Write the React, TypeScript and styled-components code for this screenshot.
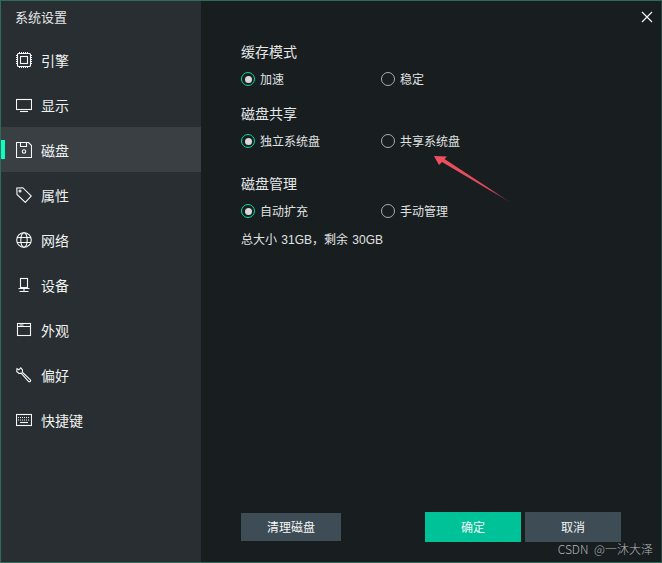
import { ReactNode } from "react";
import styled, { createGlobalStyle } from "styled-components";

const GlobalStyle = createGlobalStyle`
  html, body {
    margin: 0;
    padding: 0;
    background: #181d20;
  }
  * {
    box-sizing: border-box;
  }
`;

const Window = styled.div`
  position: relative;
  display: flex;
  width: 662px;
  height: 563px;
  border: 1px solid #2f6b5a;
  border-right-color: #24483f;
  background: #181d20;
  color: #e6e8e8;
  font-family: "Liberation Sans", "Noto Sans CJK SC", sans-serif;
  overflow: hidden;
`;

const Sidebar = styled.aside`
  width: 200px;
  flex-shrink: 0;
  background: #282e31;
`;

const SidebarTitle = styled.div`
  height: 36px;
  padding: 8px 0 0 14px;
  font-size: 13px;
  line-height: 17px;
`;

const NavList = styled.ul`
  list-style: none;
  margin: 0;
  padding: 0;
`;

const NavItem = styled.li<{ $active?: boolean }>`
  position: relative;
  display: flex;
  align-items: center;
  height: 45px;
  padding-left: 15px;
  font-size: 14px;
  color: #f0f2f2;
  background: ${(props) => (props.$active ? "#393f42" : "transparent")};

  &::before {
    content: "";
    display: ${(props) => (props.$active ? "block" : "none")};
    position: absolute;
    left: 0;
    top: 13px;
    width: 4px;
    height: 19px;
    background: #0dfcc0;
  }
`;

const NavIcon = styled.svg`
  width: 16px;
  height: 16px;
  margin-right: 9px;
  flex-shrink: 0;
  fill: none;
  stroke: #f6f8f8;
  stroke-width: 1.1;
`;

const Main = styled.main`
  position: relative;
  flex: 1;
  display: flex;
  flex-direction: column;
  padding: 42px 40px 20px 40px;
`;

const CloseButton = styled.svg`
  position: absolute;
  top: 10px;
  right: 12px;
  width: 12px;
  height: 12px;
  stroke: #f2f4f4;
  stroke-width: 1.2;
`;

const Section = styled.section<{ $gap: number }>`
  margin-bottom: ${(props) => props.$gap}px;
`;

const SectionTitle = styled.div`
  font-size: 14px;
  line-height: 18px;
  color: #e6e8e8;
`;

const RadioRow = styled.div`
  display: flex;
  margin-top: 9px;
`;

const RadioOption = styled.label`
  display: flex;
  align-items: center;
  width: 140px;
  height: 18px;
  font-size: 12px;
  color: #e0e2e2;
`;

const RadioCircle = styled.span<{ $checked?: boolean }>`
  display: flex;
  align-items: center;
  justify-content: center;
  width: 14px;
  height: 14px;
  margin-right: 5px;
  border-radius: 50%;
  border: 1.5px solid ${(props) => (props.$checked ? "#0fd3a4" : "#a9adae")};

  &::after {
    content: "";
    display: ${(props) => (props.$checked ? "block" : "none")};
    width: 7px;
    height: 7px;
    border-radius: 50%;
    background: #d8dada;
  }
`;

const RadioText = styled.span`
  padding-bottom: 2px;
`;

const Summary = styled.div`
  margin-top: 12px;
  font-size: 12px;
  line-height: 16px;
  word-spacing: 1px;
  color: #e0e2e2;
`;

const Footer = styled.footer`
  display: flex;
  align-items: center;
  margin-top: auto;
`;

const Button = styled.button<{ $primary?: boolean; $small?: boolean }>`
  width: ${(props) => (props.$small ? 100 : 96)}px;
  height: ${(props) => (props.$small ? 28 : 30)}px;
  margin-right: 4px;
  border: none;
  padding: 0 0 2px;
  font-family: inherit;
  font-size: 12px;
  color: #f4f6f6;
  background: ${(props) => (props.$primary ? "#00c298" : "#3d4c55")};
`;

const Spacer = styled.div`
  width: 80px;
`;

const Arrow = styled.svg`
  position: absolute;
  left: 231px;
  top: 153px;
  width: 82px;
  height: 52px;
`;

const Watermark = styled.div`
  position: absolute;
  right: 8px;
  bottom: 6px;
  font-family: "Noto Sans CJK SC", sans-serif;
  font-weight: 300;
  font-size: 12px;
  line-height: 14px;
  word-spacing: 3px;
  color: #b4b8b9;
`;

const icons: Record<string, ReactNode> = {
  engine: (
    <>
      <rect x="1.5" y="1.5" width="13" height="13" rx="1" />
      <rect x="4.5" y="4.5" width="7" height="7" />
      <path d="M3 .5h1M5 .5h1M7 .5h1M9 .5h1M11 .5h1M3 15.5h1M5 15.5h1M7 15.5h1M9 15.5h1M11 15.5h1M.5 3v1M.5 5v1M.5 7v1M.5 9v1M.5 11v1M15.5 3v1M15.5 5v1M15.5 7v1M15.5 9v1M15.5 11v1" />
    </>
  ),
  display: (
    <>
      <rect x=".5" y="2.5" width="15" height="10" />
      <path d="M4 14.5h8" />
    </>
  ),
  disk: (
    <>
      <path d="M.5.5h12l3 3v12H.5z" />
      <path d="M4.5.5v4h6v-4" />
      <circle cx="8" cy="9.5" r="1.7" />
    </>
  ),
  tag: (
    <>
      <path d="M.8 1l6-.3 8.5 8.3-6 6.4-8.3-8z" />
      <circle cx="4" cy="4" r="1" />
    </>
  ),
  network: (
    <>
      <circle cx="8" cy="8" r="7.3" />
      <ellipse cx="8" cy="8" rx="3.2" ry="7.3" />
      <path d="M1 5.5h14M1 10.5h14" />
    </>
  ),
  device: (
    <>
      <rect x="4.5" y="1.5" width="7" height="9" />
      <path d="M8 10.5v4M2.5 11.5h11M3.5 14.5h9" />
    </>
  ),
  appearance: (
    <>
      <rect x="1.5" y="1.5" width="13" height="12" />
      <path d="M1.5 4.5h13M3.5 3h4" />
    </>
  ),
  prefs: (
    <path d="M4.8.8l-2 2L1 1.6.7 4.5l2.2 2 2.2-.3 7.6 8.3c1 .9 2.6-.6 1.7-1.6L6.3 5.2l.2-2.2z" />
  ),
  keyboard: (
    <>
      <rect x=".5" y="2.5" width="15" height="11" />
      <path d="M2 5.5h12M2 8h12" strokeDasharray="1 1" />
      <path d="M4 10.5h8" />
    </>
  ),
};

const navItems = [
  { key: "engine", label: "引擎" },
  { key: "display", label: "显示" },
  { key: "disk", label: "磁盘", active: true },
  { key: "tag", label: "属性" },
  { key: "network", label: "网络" },
  { key: "device", label: "设备" },
  { key: "appearance", label: "外观" },
  { key: "prefs", label: "偏好" },
  { key: "keyboard", label: "快捷键" },
];

const sections = [
  { title: "缓存模式", left: "加速", right: "稳定", gap: 17 },
  { title: "磁盘共享", left: "独立系统盘", right: "共享系统盘", gap: 25 },
  { title: "磁盘管理", left: "自动扩充", right: "手动管理", gap: 0 },
];

export default function App() {
  return (
    <Window>
      <GlobalStyle />
      <Sidebar>
        <SidebarTitle>系统设置</SidebarTitle>
        <NavList>
          {navItems.map((item) => (
            <NavItem key={item.key} $active={item.active}>
              <NavIcon viewBox="0 0 16 16">{icons[item.key]}</NavIcon>
              {item.label}
            </NavItem>
          ))}
        </NavList>
      </Sidebar>
      <Main>
        <CloseButton viewBox="0 0 12 12">
          <path d="M1 1l10 10M11 1L1 11" />
        </CloseButton>
        {sections.map((section) => (
          <Section key={section.title} $gap={section.gap}>
            <SectionTitle>{section.title}</SectionTitle>
            <RadioRow>
              <RadioOption>
                <RadioCircle $checked />
                <RadioText>{section.left}</RadioText>
              </RadioOption>
              <RadioOption>
                <RadioCircle />
                <RadioText>{section.right}</RadioText>
              </RadioOption>
            </RadioRow>
          </Section>
        ))}
        <Summary>总大小 31GB，剩余 30GB</Summary>
        <Footer>
          <Button $small>清理磁盘</Button>
          <Spacer />
          <Button $primary>确定</Button>
          <Button>取消</Button>
        </Footer>
        <Arrow viewBox="0 0 82 52">
          <defs>
            <linearGradient id="arrowFade" x1="0" y1="0" x2="1" y2="1">
              <stop offset="0" stopColor="#f0505f" />
              <stop offset="0.7" stopColor="#e04a5a" />
              <stop offset="1" stopColor="#3a2228" />
            </linearGradient>
          </defs>
          <path d="M2 2l13 .5-2.5 2.5L81 50 10 8 7 11z" fill="url(#arrowFade)" />
        </Arrow>
      </Main>
      <Watermark>CSDN @一沐大泽</Watermark>
    </Window>
  );
}
